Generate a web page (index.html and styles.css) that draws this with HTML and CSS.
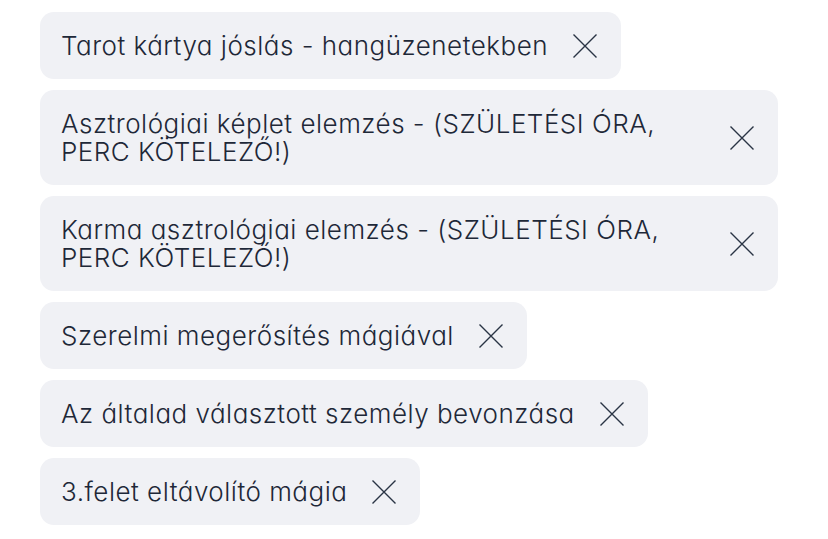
FILE: index.html
```html
<!DOCTYPE html>
<html lang="hu">
<head>
<meta charset="utf-8">
<link rel="stylesheet" href="styles.css">
</head>
<body>
<div class="chips">
  <div class="chip"><span class="label">Tarot kártya jóslás - hangüzenetekben</span><svg class="x" viewBox="0 0 24 24"><path d="M0.5 0.5L23.5 23.5M23.5 0.5L0.5 23.5"/></svg></div>
  <div class="chip"><span class="label">Asztrológiai képlet elemzés - (SZÜLETÉSI ÓRA, PERC KÖTELEZŐ!)</span><svg class="x" viewBox="0 0 24 24"><path d="M0.5 0.5L23.5 23.5M23.5 0.5L0.5 23.5"/></svg></div>
  <div class="chip"><span class="label">Karma asztrológiai elemzés - (SZÜLETÉSI ÓRA, PERC KÖTELEZŐ!)</span><svg class="x" viewBox="0 0 24 24"><path d="M0.5 0.5L23.5 23.5M23.5 0.5L0.5 23.5"/></svg></div>
  <div class="chip"><span class="label">Szerelmi megerősítés mágiával</span><svg class="x" viewBox="0 0 24 24"><path d="M0.5 0.5L23.5 23.5M23.5 0.5L0.5 23.5"/></svg></div>
  <div class="chip"><span class="label">Az általad választott személy bevonzása</span><svg class="x" viewBox="0 0 24 24"><path d="M0.5 0.5L23.5 23.5M23.5 0.5L0.5 23.5"/></svg></div>
  <div class="chip"><span class="label">3.felet eltávolító mágia</span><svg class="x" viewBox="0 0 24 24"><path d="M0.5 0.5L23.5 23.5M23.5 0.5L0.5 23.5"/></svg></div>
</div>
</body>
</html>
```
FILE: styles.css
```css
html, body {
  margin: 0;
  background: #ffffff;
}
body {
  padding: 12px 0 0 40px;
  font-family: "Inter", "Noto Sans", sans-serif;
  font-feature-settings: "cv11" 1;
  color: #1e2838;
}
.chips {
  display: flex;
  flex-direction: column;
  align-items: flex-start;
  gap: 11px;
  width: 738px;
}
.chip {
  box-sizing: border-box;
  max-width: 738px;
  display: flex;
  align-items: center;
  gap: 25px;
  padding: 19.5px 24px 19.5px 21px;
  background: #f0f1f5;
  border-radius: 14px;
}
.label {
  font-size: 26px;
  font-weight: 300;
  line-height: 28px;
  letter-spacing: 0.5px;
  flex: 1 1 auto;
}
.x {
  flex: 0 0 24px;
  width: 24px;
  height: 24px;
  stroke: #2a3444;
  stroke-width: 1.4;
  fill: none;
}
```
